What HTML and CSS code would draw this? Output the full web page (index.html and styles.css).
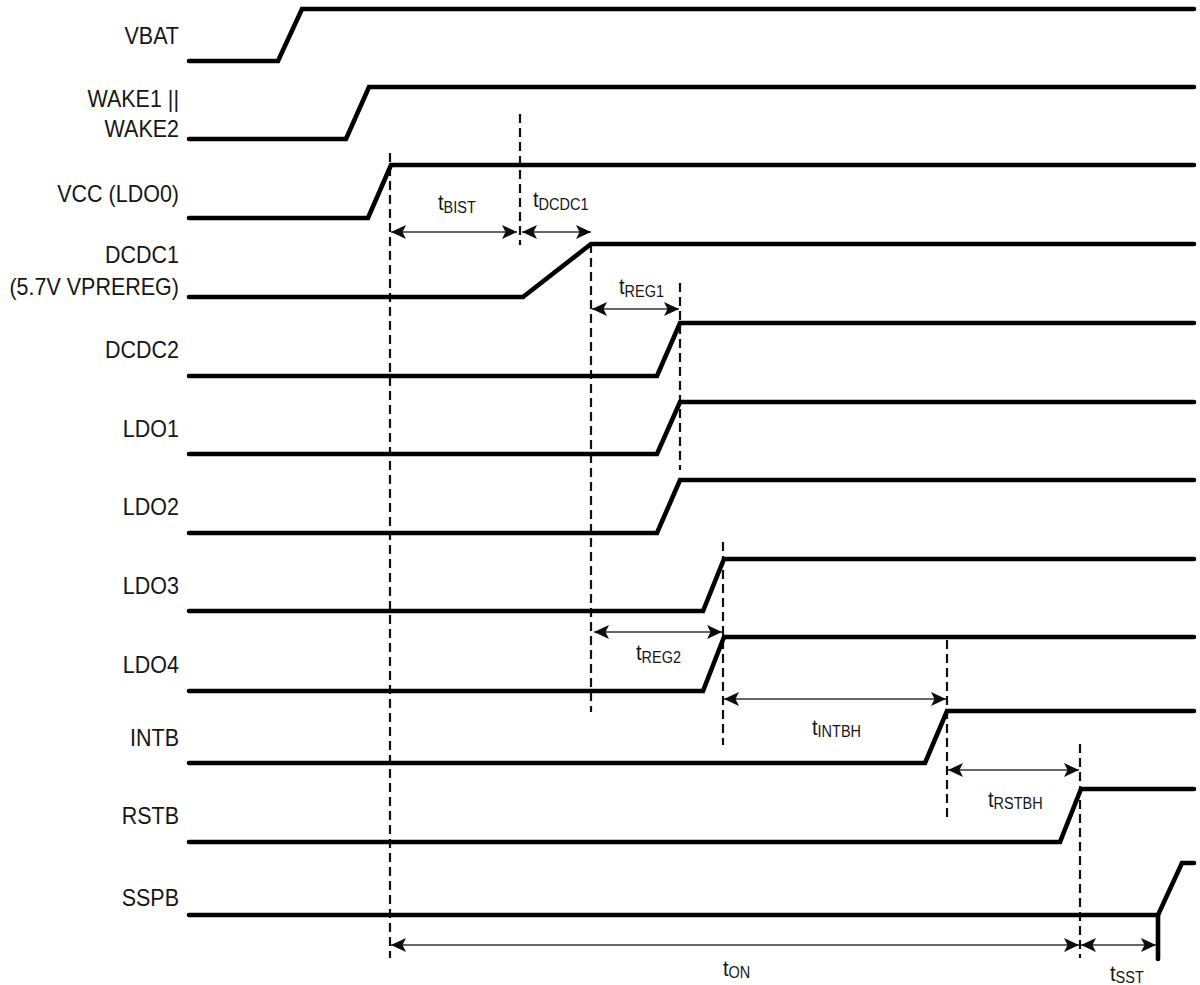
FILE: index.html
```html
<!DOCTYPE html>
<html lang="en">
<head>
<meta charset="utf-8">
<title>Power-up sequence timing</title>
<link rel="stylesheet" href="styles.css">
</head>
<body>
<div class="diagram">
<svg class="canvas" width="1200" height="985" viewBox="0 0 1200 985" xmlns="http://www.w3.org/2000/svg">
  <defs>
    <marker id="ah" viewBox="0 0 15 14" refX="15" refY="7" markerWidth="15" markerHeight="14" markerUnits="userSpaceOnUse" orient="auto-start-reverse">
      <path class="head" d="M0,0 L15,7 L0,14 L3.5,7 Z"/>
    </marker>
  </defs>

  <!-- signal names -->
  <g class="names">
    <text transform="translate(179,44) scale(1,1.12)">VBAT</text>
    <text transform="translate(179,107) scale(1,1.12)">WAKE1 ||</text>
    <text transform="translate(179,137) scale(1,1.12)">WAKE2</text>
    <text transform="translate(179,202) scale(1,1.12)">VCC (LDO0)</text>
    <text transform="translate(179,263) scale(1,1.12)">DCDC1</text>
    <text transform="translate(179,295) scale(1,1.12)">(5.7V VPREREG)</text>
    <text transform="translate(179,358) scale(1,1.12)">DCDC2</text>
    <text transform="translate(179,437) scale(1,1.12)">LDO1</text>
    <text transform="translate(179,515) scale(1,1.12)">LDO2</text>
    <text transform="translate(179,594) scale(1,1.12)">LDO3</text>
    <text transform="translate(179,673) scale(1,1.12)">LDO4</text>
    <text transform="translate(179,746) scale(1,1.12)">INTB</text>
    <text transform="translate(179,824) scale(1,1.12)">RSTB</text>
    <text transform="translate(179,906) scale(1,1.12)">SSPB</text>
  </g>

  <!-- dashed reference lines -->
  <g class="dash">
    <path d="M390,153 V958"/>
    <path d="M520,114 V245"/>
    <path d="M591,244 V712"/>
    <path d="M680,283 V470"/>
    <path d="M723,542 V745"/>
    <path d="M947,640 V819"/>
    <path d="M1080,744 V958"/>
  </g>

  <!-- waveforms -->
  <g class="wave">
    <path d="M189,61 H278 L302,9 H1194"/>
    <path d="M189,139 H346 L369,87 H1194"/>
    <path d="M189,218 H368 L391,165 H1194"/>
    <path d="M189,297 H523 L591,244 H1194"/>
    <path d="M189,376 H657 L680,323 H1194"/>
    <path d="M189,454 H657 L680,402 H1194"/>
    <path d="M189,533 H657 L680,480 H1194"/>
    <path d="M189,611 H703 L724,559 H1194"/>
    <path d="M189,691 H703 L724,637 H1194"/>
    <path d="M189,763 H925 L947,711 H1194"/>
    <path d="M189,842 H1060 L1081,789 H1194"/>
    <path d="M189,915 H1158 L1182,863 H1194"/>
    <path d="M1158,915 V959"/>
  </g>

  <!-- timing arrows -->
  <g class="arrow">
    <path d="M391,232 H517"/>
    <path d="M522,232 H591"/>
    <path d="M592,309 H679"/>
    <path d="M594,632 H722"/>
    <path d="M724,699 H946"/>
    <path d="M948,770 H1079"/>
    <path d="M391,945 H1079"/>
    <path d="M1081,945 H1156"/>
  </g>

  <!-- timing labels -->
  <g class="tlabels">
    <text transform="translate(438,210) scale(1,1.12)">t<tspan class="sub" dy="3">BIST</tspan></text>
    <text transform="translate(533,207) scale(1,1.12)">t<tspan class="sub" dy="3">DCDC1</tspan></text>
    <text transform="translate(619,294) scale(1,1.12)">t<tspan class="sub" dy="3">REG1</tspan></text>
    <text transform="translate(636,660) scale(1,1.12)">t<tspan class="sub" dy="3">REG2</tspan></text>
    <text transform="translate(812,735) scale(1,1.12)">t<tspan class="sub" dy="2">INTBH</tspan></text>
    <text transform="translate(988,807) scale(1,1.12)">t<tspan class="sub" dy="2">RSTBH</tspan></text>
    <text transform="translate(723,976) scale(1,1.12)">t<tspan class="sub" dy="2">ON</tspan></text>
    <text transform="translate(1110,981) scale(1,1.12)">t<tspan class="sub" dy="2">SST</tspan></text>
  </g>
</svg>
</div>
</body>
</html>
```

FILE: styles.css
```css
html, body {
  margin: 0;
  padding: 0;
  background: #ffffff;
}

.diagram {
  width: 1200px;
  height: 985px;
  overflow: hidden;
  background: #ffffff;
}

.canvas {
  display: block;
}

.names text {
  font-family: "Liberation Sans", Arial, sans-serif;
  font-size: 21.5px;
  fill: #161616;
  text-anchor: end;
}

.tlabels text {
  font-family: "Liberation Sans", Arial, sans-serif;
  font-size: 20px;
  fill: #161616;
}

.tlabels .sub {
  font-size: 14.5px;
}

.wave path {
  fill: none;
  stroke: #000000;
  stroke-width: 4.6;
  stroke-linecap: round;
  stroke-linejoin: miter;
}

.dash path {
  fill: none;
  stroke: #111111;
  stroke-width: 2.2;
  stroke-dasharray: 9 5;
}

.arrow path {
  fill: none;
  stroke: #333333;
  stroke-width: 1.7;
  marker-start: url(#ah);
  marker-end: url(#ah);
}

.head {
  fill: #0d0d0d;
  stroke: none;
}
```
